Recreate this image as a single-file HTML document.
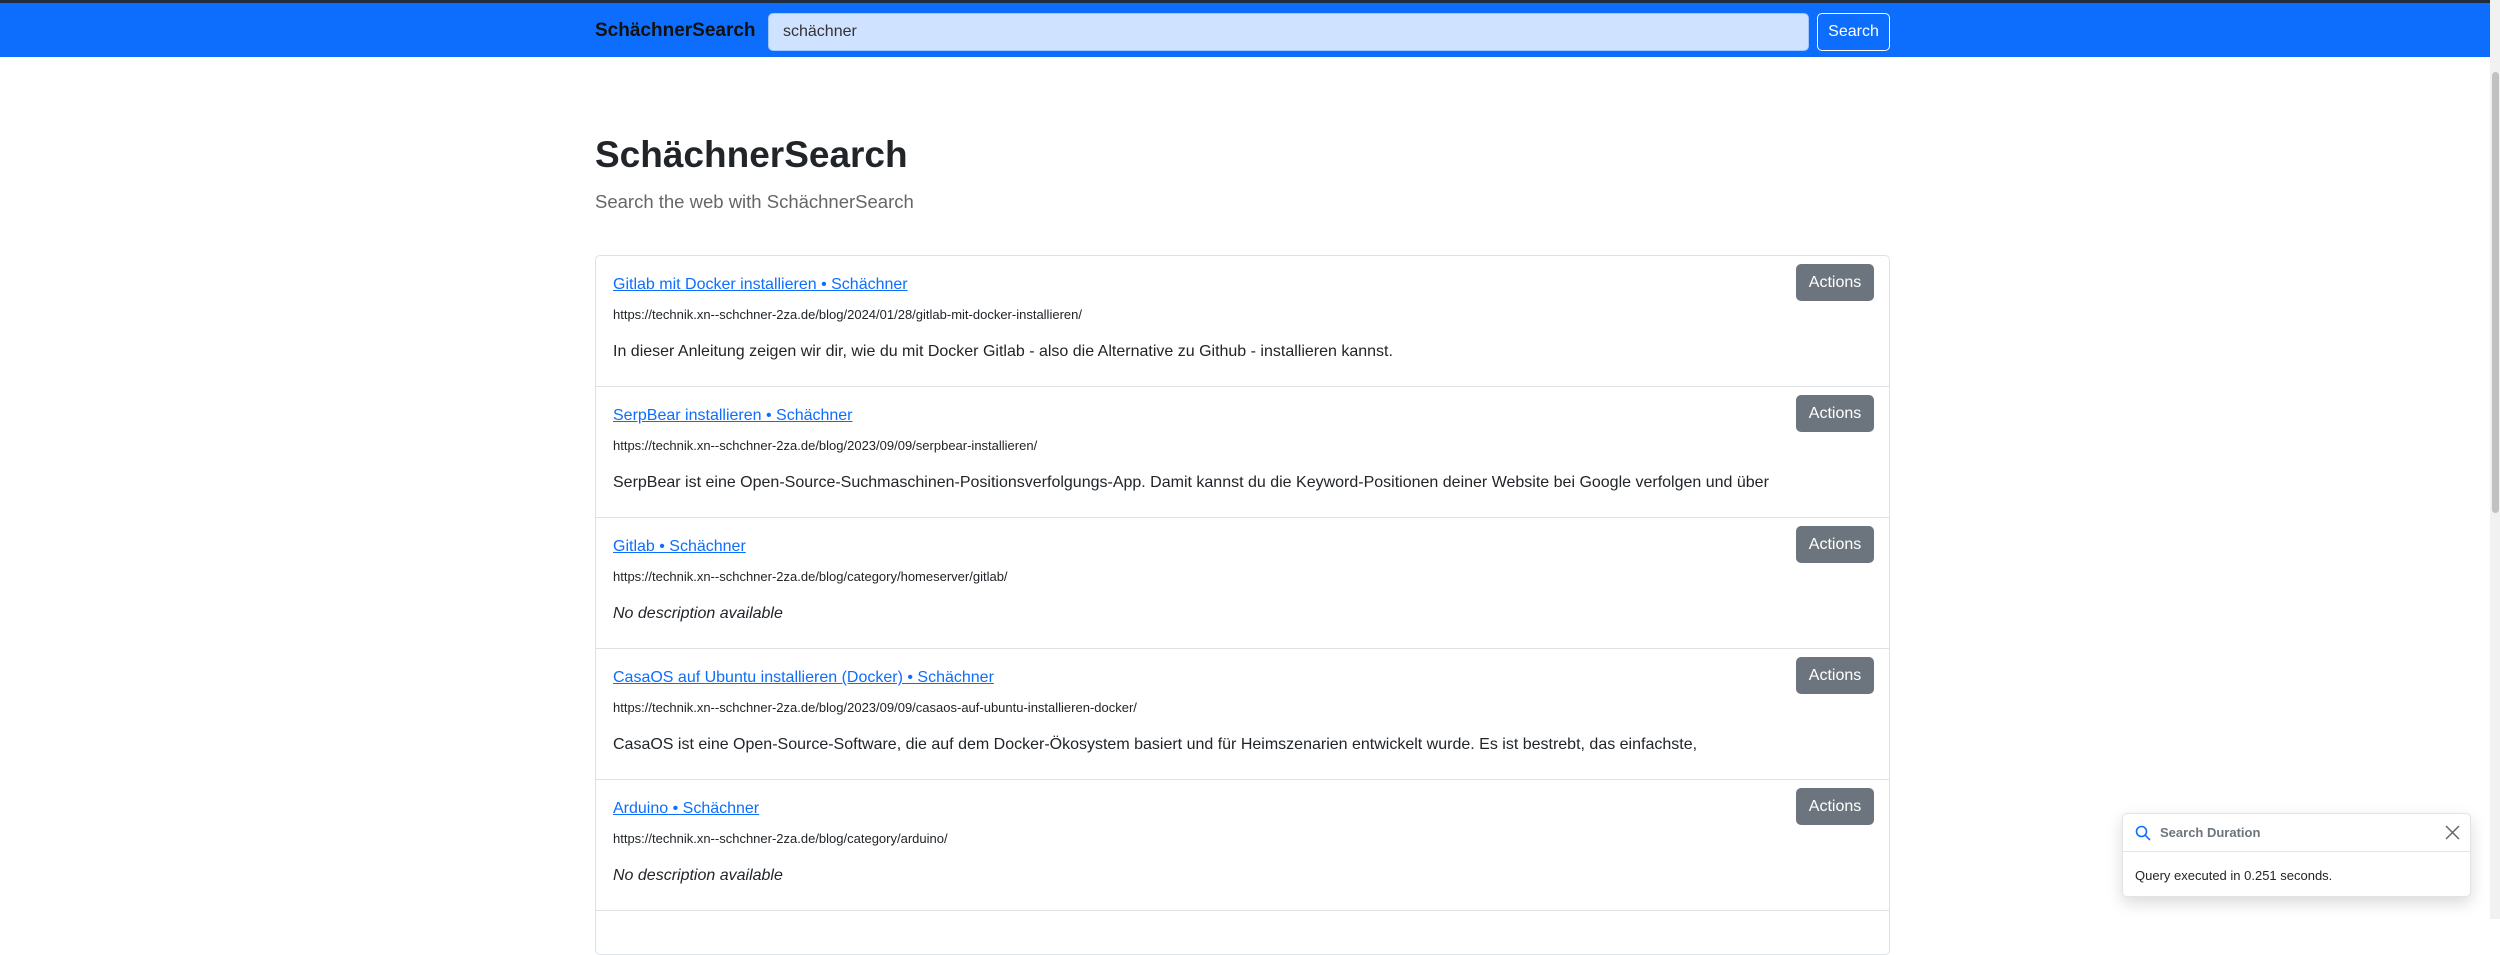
<!DOCTYPE html>
<html><head><meta charset="utf-8"><style>
*{box-sizing:border-box;margin:0;padding:0}
body{width:2500px;height:919px;overflow:hidden;background:#fff;font-family:"Liberation Sans",sans-serif;color:#212529;position:relative}
.nav{position:absolute;left:0;top:0;width:2490px;height:57px;background:#0d6efd;border-top:3px solid #1f2d3d}
.brand{position:absolute;left:595px;top:17px;font-size:19px;font-weight:bold;color:#111}
.inp{position:absolute;left:768px;top:10px;width:1041px;height:38px;background:#cfe2ff;border:1px solid #9ec5fe;border-radius:5px;font-size:16px;padding:9px 14px;color:#333}
.btn{position:absolute;left:1817px;top:10px;width:73px;height:38px;border:1px solid #fff;border-radius:5px;color:#fff;font-size:16px;text-align:center;line-height:36px}
h1{position:absolute;left:595px;top:134px;font-size:37px;font-weight:bold}
.sub{position:absolute;left:595px;top:191px;font-size:18.5px;font-weight:300;color:#666}
.list{position:absolute;left:595px;top:255px;width:1295px;height:700px;border:1px solid #dee2e6;border-radius:5px}
.item{position:absolute;left:0;width:1293px;height:131px;border-bottom:1px solid #dee2e6}
.t{position:absolute;left:17px;top:20px;font-size:16px;color:#0d6efd;text-decoration:underline}
.u{position:absolute;left:17px;top:51px;font-size:13px;color:#212529}
.d{position:absolute;left:17px;top:87px;font-size:16px}
.d i{font-style:italic}
.a{position:absolute;left:1200px;top:8px;width:78px;height:37px;background:#6c757d;border-radius:5px;color:#fff;font-size:16px;text-align:center;line-height:37px}
.sb{position:absolute;left:2490px;top:0;width:10px;height:919px;background:#f1f1f1}
.th{position:absolute;left:2492px;top:72px;width:7px;height:441px;background:#c1c1c1;border-radius:4px}
.toast{position:absolute;left:2122px;top:813px;width:349px;height:84px;background:#fff;border:1px solid #e3e3e3;border-radius:5px;box-shadow:0 6px 16px rgba(0,0,0,.15)}
.th1{height:38px;border-bottom:1px solid #e6e6e6;position:relative}
.th1 b{position:absolute;left:37px;top:11px;font-size:13px;color:#6c757d}
.tb{position:absolute;left:12px;top:54px;font-size:13px}
</style></head><body>
<div class="nav"><div class="brand">SchächnerSearch</div><div class="inp">schächner</div><div class="btn">Search</div></div>
<h1>SchächnerSearch</h1>
<div class="sub">Search the web with SchächnerSearch</div>
<div class="list">
<div class="item" style="top:0"><a class="t">Gitlab mit Docker installieren • Schächner</a><div class="u">https://technik.xn--schchner-2za.de/blog/2024/01/28/gitlab-mit-docker-installieren/</div><div class="d">In dieser Anleitung zeigen wir dir, wie du mit Docker Gitlab - also die Alternative zu Github - installieren kannst.</div><div class="a">Actions</div></div>
<div class="item" style="top:131px"><a class="t">SerpBear installieren • Schächner</a><div class="u">https://technik.xn--schchner-2za.de/blog/2023/09/09/serpbear-installieren/</div><div class="d">SerpBear ist eine Open-Source-Suchmaschinen-Positionsverfolgungs-App. Damit kannst du die Keyword-Positionen deiner Website bei Google verfolgen und über</div><div class="a">Actions</div></div>
<div class="item" style="top:262px"><a class="t">Gitlab • Schächner</a><div class="u">https://technik.xn--schchner-2za.de/blog/category/homeserver/gitlab/</div><div class="d"><i>No description available</i></div><div class="a">Actions</div></div>
<div class="item" style="top:393px"><a class="t">CasaOS auf Ubuntu installieren (Docker) • Schächner</a><div class="u">https://technik.xn--schchner-2za.de/blog/2023/09/09/casaos-auf-ubuntu-installieren-docker/</div><div class="d">CasaOS ist eine Open-Source-Software, die auf dem Docker-Ökosystem basiert und für Heimszenarien entwickelt wurde. Es ist bestrebt, das einfachste,</div><div class="a">Actions</div></div>
<div class="item" style="top:524px"><a class="t">Arduino • Schächner</a><div class="u">https://technik.xn--schchner-2za.de/blog/category/arduino/</div><div class="d"><i>No description available</i></div><div class="a">Actions</div></div>
</div>
<div class="sb"></div><div class="th"></div>
<div class="toast"><div class="th1"><svg style="position:absolute;left:12px;top:11px" width="16" height="16" viewBox="0 0 16 16"><circle cx="6.5" cy="6.5" r="5" fill="none" stroke="#0d6efd" stroke-width="1.6"/><line x1="10.2" y1="10.2" x2="15" y2="15" stroke="#0d6efd" stroke-width="1.6"/></svg><b>Search Duration</b><svg style="position:absolute;right:10px;top:11px" width="15" height="15" viewBox="0 0 15 15"><path d="M1 1L14 14M14 1L1 14" stroke="#666" stroke-width="1.5"/></svg></div><div class="tb">Query executed in 0.251 seconds.</div></div>
</body></html>
